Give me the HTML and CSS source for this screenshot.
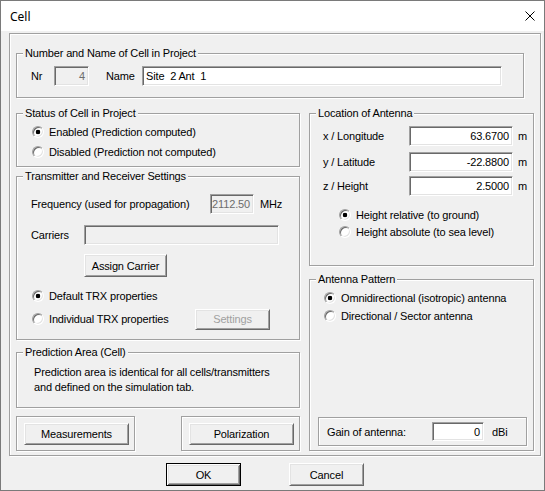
FILE: index.html
```html
<!DOCTYPE html>
<html>
<head>
<meta charset="utf-8">
<link rel="stylesheet" href="styles.css">
</head>
<body>
<div class="window">
  <div class="titlebar">
    <span class="title">Cell</span>
    <svg class="close" viewBox="0 0 10 10"><path d="M0.5 0.5 L9.5 9.5 M9.5 0.5 L0.5 9.5" stroke="#000" stroke-width="1" fill="none"/></svg>
  </div>
  <div class="frame etched">
    <div class="group etched g-number">
      <div class="legend">Number and Name of Cell in Project</div>
      <div class="name-row">
        <span class="nr-lbl">Nr</span>
        <div class="edit ro nr">4</div>
        <span class="name-lbl">Name</span>
        <div class="edit name">Site  2 Ant  1</div>
      </div>
    </div>
    <div class="columns">
      <div class="col-left">
        <div class="group etched g-status">
          <div class="legend">Status of Cell in Project</div>
          <div class="opt opt-status first"><span class="radio on"></span><span>Enabled (Prediction computed)</span></div>
          <div class="opt opt-status"><span class="radio"></span><span>Disabled (Prediction not computed)</span></div>
        </div>
        <div class="group etched g-trx">
          <div class="legend">Transmitter and Receiver Settings</div>
          <div class="form-row freq-row">
            <span class="freq-lbl">Frequency (used for propagation)</span>
            <div class="edit ro freq">2112.50</div>
            <span class="unit-mhz">MHz</span>
          </div>
          <div class="form-row carriers-row">
            <span class="carriers-lbl">Carriers</span>
            <div class="edit ro carriers"></div>
          </div>
          <div class="btn assign">Assign Carrier</div>
          <div class="opt opt-trx first"><span class="radio on"></span><span>Default TRX properties</span></div>
          <div class="opt opt-trx second"><span class="radio"></span><span>Individual TRX properties</span><div class="btn disabled settings">Settings</div></div>
        </div>
        <div class="group etched g-pred">
          <div class="legend">Prediction Area (Cell)</div>
          <div class="pred-text">Prediction area is identical for all cells/transmitters<br>and defined on the simulation tab.</div>
        </div>
        <div class="bottom-row">
          <div class="etched btn-box"><div class="btn box-btn">Measurements</div></div>
          <div class="etched btn-box"><div class="btn box-btn">Polarization</div></div>
        </div>
      </div>
      <div class="col-right">
        <div class="group etched g-loc">
          <div class="legend">Location of Antenna</div>
          <div class="coord-row r1"><span class="coord-lbl">x / Longitude</span><div class="edit num coord">63.6700</div><span class="unit">m</span></div>
          <div class="coord-row r2"><span class="coord-lbl">y / Latitude</span><div class="edit num coord">-22.8800</div><span class="unit">m</span></div>
          <div class="coord-row r3"><span class="coord-lbl">z / Height</span><div class="edit num coord">2.5000</div><span class="unit">m</span></div>
          <div class="opt opt-loc first"><span class="radio on"></span><span>Height relative (to ground)</span></div>
          <div class="opt opt-loc"><span class="radio"></span><span>Height absolute (to sea level)</span></div>
        </div>
        <div class="group etched g-ant">
          <div class="legend">Antenna Pattern</div>
          <div class="opt opt-ant first"><span class="radio on"></span><span>Omnidirectional (isotropic) antenna</span></div>
          <div class="opt opt-ant"><span class="radio"></span><span>Directional / Sector antenna</span></div>
          <div class="etched gain-box">
            <span class="gain-lbl">Gain of antenna:</span>
            <div class="edit num gain">0</div>
            <span class="unit-dbi">dBi</span>
          </div>
        </div>
      </div>
    </div>
  </div>
  <div class="dlg-buttons">
    <div class="btn default dlg-btn">OK</div>
    <div class="btn dlg-btn">Cancel</div>
  </div>
</div>
</body>
</html>
```
FILE: styles.css
```css
* { box-sizing: border-box; }
html, body { margin: 0; padding: 0; background: #f0f0f0; }
body {
  font-family: "Liberation Sans", Arial, sans-serif;
  font-size: 11px;
  color: #000;
  letter-spacing: -0.15px;
}
.window {
  width: 545px;
  height: 491px;
  border: 1px solid #7a7a7a;
  background: #f0f0f0;
  overflow: hidden;
}
.titlebar {
  height: 30px;
  background: #fff;
  display: flex;
  align-items: center;
}
.title {
  font-family: "Noto Sans", "Open Sans", sans-serif;
  font-size: 12px;
  letter-spacing: 0;
  padding-left: 9px;
}
.close {
  margin-left: auto;
  margin-right: 9px;
  width: 10px;
  height: 10px;
}
.etched {
  border: 1px solid #a0a0a0;
  box-shadow: inset 1px 1px #fff, 1px 1px #fff;
}
.frame {
  margin: 2px 0 0 8px;
  width: 532px;
  height: 423px;
  padding: 19px 0 0 6px;
}
.group {
  display: flex;
  flex-direction: column;
}
.legend {
  align-self: flex-start;
  margin: -7px 0 0 6px;
  padding: 0 2px;
  height: 13px;
  line-height: 13px;
  background: #f0f0f0;
  white-space: nowrap;
}
.g-number { width: 508px; height: 45px; }
.name-row {
  display: flex;
  align-items: center;
  height: 20px;
  margin-top: 6px;
  padding-left: 14px;
}
.nr-lbl { width: 23px; }
.nr { width: 35px; }
.name-lbl { margin-left: 17px; width: 36px; }
.name { width: 360px; white-space: pre; }

.edit {
  height: 20px;
  border: 1px solid;
  border-color: #a0a0a0 #fff #fff #a0a0a0;
  box-shadow: inset 1px 1px #696969, inset -1px -1px #e3e3e3;
  background: #fff;
  padding: 0 3px;
  display: flex;
  align-items: center;
  white-space: pre;
}
.ro { background: #f0f0f0; color: #6d6d6d; justify-content: flex-end; }
.num { justify-content: flex-end; }

.btn {
  height: 23px;
  border: 1px solid;
  border-color: #fff #696969 #696969 #fff;
  box-shadow: inset 1px 1px #e3e3e3, inset -1px -1px #a0a0a0;
  background: #f0f0f0;
  display: flex;
  align-items: center;
  justify-content: center;
  white-space: nowrap;
}
.btn.disabled { color: #a0a0a0; }
.btn.default {
  border: 1px solid #000;
  box-shadow: inset 1px 1px #fff, inset -1px -1px #696969, inset 2px 2px #e3e3e3, inset -2px -2px #a0a0a0;
}

.radio {
  flex: none;
  width: 12px;
  height: 12px;
  border-radius: 50%;
  border: 1px solid;
  border-color: #a0a0a0 #fff #fff #a0a0a0;
  box-shadow: inset 1px 1px #696969, inset -1px -1px #e3e3e3;
  background: #fff;
  margin-right: 5px;
}
.radio.on { background: radial-gradient(circle, #000 0 2px, #fff 2.6px); }
.opt { display: flex; align-items: center; white-space: nowrap; }

.columns { display: flex; gap: 9px; margin-top: 15px; }
.col-left { width: 284px; display: flex; flex-direction: column; }
.col-right { width: 225px; display: flex; flex-direction: column; }

.g-status { height: 54px; }
.opt-status { height: 20px; padding-left: 15px; }
.opt-status.first { margin-top: 2px; }

.g-trx { height: 164px; margin-top: 9px; }
.form-row { display: flex; align-items: center; height: 20px; padding-left: 14px; margin-top: 11px; }
.freq-lbl { width: 179px; }
.freq { width: 44px; }
.unit-mhz { margin-left: 6px; }
.carriers-lbl { width: 53px; }
.carriers { width: 195px; }
.assign { width: 83px; margin: 9px 0 0 67px; }
.opt-trx { padding-left: 15px; }
.opt-trx.first { height: 20px; margin-top: 9px; }
.opt-trx.second { height: 22px; margin-top: 2px; }
.settings { width: 75px; height: 21px; margin-left: auto; margin-right: 29px; }

.g-pred { height: 56px; margin-top: 12px; }
.pred-text { margin-top: 6px; padding-left: 17px; line-height: 15px; }

.bottom-row { display: flex; justify-content: space-between; margin-top: 8px; }
.btn-box { width: 119px; height: 35px; padding: 6px 0 0 7px; }
.box-btn { width: 105px; height: 22px; }

.g-loc { height: 153px; }
.coord-row { display: flex; align-items: center; height: 20px; padding-left: 13px; }
.coord-row.r1 { margin-top: 6px; }
.coord-row.r2 { margin-top: 6px; }
.coord-row.r3 { margin-top: 4px; }
.coord-lbl { width: 86px; }
.coord { width: 104px; }
.unit { margin-left: 5px; }
.opt-loc { height: 17px; padding-left: 29px; }
.opt-loc.first { margin-top: 10px; }

.g-ant { height: 172px; margin-top: 13px; }
.opt-ant { height: 18px; padding-left: 14px; }
.opt-ant.first { margin-top: 3px; }
.gain-box {
  margin: auto 0 4px 8px;
  width: 209px;
  height: 29px;
  display: flex;
  align-items: center;
  padding-left: 8px;
}
.gain-lbl { width: 105px; }
.gain { width: 52px; height: 19px; }
.unit-dbi { margin-left: 8px; }

.dlg-buttons { display: flex; gap: 48px; margin-top: 7px; padding-left: 165px; }
.dlg-btn { width: 75px; height: 23px; }
```
